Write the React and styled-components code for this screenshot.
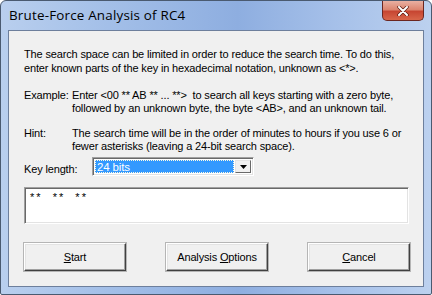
import React from "react";
import styled, { createGlobalStyle } from "styled-components";

const Global = createGlobalStyle`
  html, body {
    margin: 0;
    padding: 0;
    background: #ffffff;
  }
  body {
    font-family: "Liberation Sans", Arial, sans-serif;
    font-size: 11px;
    letter-spacing: -0.15px;
    color: #000;
  }
`;

const Window = styled.div`
  width: 432px;
  height: 295px;
  box-sizing: border-box;
  border: 1px solid #4a5a70;
  border-radius: 6px 6px 2px 2px;
  background: linear-gradient(90deg, #b9cfee 0%, #a3bfe8 25%, #8eaee0 55%, #a8c2ea 80%, #bcd1ef 100%);
  display: flex;
  flex-direction: column;
  padding: 0 7px 7px 7px;
  overflow: hidden;
`;

const TitleBar = styled.div`
  height: 29px;
  display: flex;
  align-items: flex-start;
  justify-content: space-between;
`;

const Title = styled.span`
  font-family: "Open Sans", "DejaVu Sans", sans-serif;
  font-size: 13.4px;
  letter-spacing: 0.2px;
  margin-top: 5px;
  margin-left: 1px;
  color: #000;
`;

const CloseButton = styled.div`
  width: 42px;
  height: 20px;
  box-sizing: border-box;
  border: 1px solid #6b2620;
  border-top: none;
  border-radius: 0 0 5px 5px;
  background: linear-gradient(180deg, #e9b0a2 0%, #dc8570 45%, #c74632 55%, #d8664a 100%);
  display: flex;
  align-items: center;
  justify-content: center;
`;

const Client = styled.div`
  flex: 1;
  background: #f0f0f0;
  border: 1px solid #6d7f9c;
  display: flex;
  flex-direction: column;
  padding: 16px 15px 0 15px;
  white-space: nowrap;
`;

const Para = styled.div`
  line-height: 14px;
  margin-bottom: 14px;
`;

const Row = styled.div`
  display: grid;
  grid-template-columns: 48px 1fr;
  line-height: 13px;
  margin-bottom: 12px;
`;

const KeyRow = styled.div`
  display: flex;
  align-items: center;
  margin-top: -8px;
`;

const KeyLabel = styled.span`
  width: 68px;
  margin-top: 5px;
`;

const Combo = styled.div`
  width: 162px;
  height: 19px;
  box-sizing: border-box;
  border-top: 1px solid #a0a0a0;
  border-left: 1px solid #a0a0a0;
  border-right: 1px solid #fff;
  border-bottom: 1px solid #fff;
  box-shadow: inset 1px 1px 0 #696969, inset -1px -1px 0 #e3e3e3;
  background: #fff;
  display: flex;
  padding: 2px;
`;

const Selected = styled.div`
  flex: 1;
  background: #3399ff;
  color: #fff;
  font-size: 11.5px;
  outline: 1px dotted #fffbe0;
  outline-offset: -1px;
  padding-left: 2px;
  line-height: 14px;
  margin-right: 1px;
`;

const DropButton = styled.div`
  width: 16px;
  box-sizing: border-box;
  background: #f0f0f0;
  border-top: 1px solid #e3e3e3;
  border-left: 1px solid #e3e3e3;
  border-right: 1px solid #696969;
  border-bottom: 1px solid #696969;
  display: flex;
  align-items: center;
  justify-content: center;
`;

const TextBox = styled.div`
  margin-top: 11px;
  height: 37px;
  width: 385px;
  box-sizing: border-box;
  background: #fff;
  border-top: 1px solid #a0a0a0;
  border-left: 1px solid #a0a0a0;
  border-right: 1px solid #fff;
  border-bottom: 1px solid #fff;
  box-shadow: inset 1px 1px 0 #696969, inset -1px -1px 0 #e3e3e3;
  padding: 3px 5px;
  letter-spacing: 2px;
  white-space: pre;
`;

const Buttons = styled.div`
  display: flex;
  justify-content: space-between;
  width: 386px;
  margin-top: 19px;
`;

const Button = styled.div`
  width: 102px;
  height: 28px;
  box-sizing: border-box;
  background: #f0f0f0;
  border-top: 1px solid #fff;
  border-left: 1px solid #fff;
  border-right: 1px solid #404040;
  border-bottom: 1px solid #404040;
  box-shadow: inset -1px -1px 0 #a0a0a0, inset 1px 1px 0 #e3e3e3;
  outline: 1px solid #b5b5b5;
  display: flex;
  align-items: center;
  justify-content: center;
  u {
    text-decoration: underline;
  }
`;

export default function App() {
  return (
    <>
      <Global />
      <Window>
        <TitleBar>
          <Title>Brute-Force Analysis of RC4</Title>
          <CloseButton>
            <svg width="12" height="10" viewBox="0 0 12 10">
              <path d="M2 1 L10 9 M10 1 L2 9" stroke="#5a1a10" strokeWidth="3.4" strokeLinecap="round" />
              <path d="M2 1 L10 9 M10 1 L2 9" stroke="#fff" strokeWidth="2" strokeLinecap="round" />
            </svg>
          </CloseButton>
        </TitleBar>
        <Client>
          <Para>
            The search space can be limited in order to reduce the search time. To do this,
            <br />
            enter known parts of the key in hexadecimal notation, unknown as &lt;*&gt;.
          </Para>
          <Row>
            <span>Example:</span>
            <span>
              Enter &lt;00 ** AB ** ... **&gt;&nbsp; to search all keys starting with a zero byte,
              <br />
              followed by an unknown byte, the byte &lt;AB&gt;, and an unknown tail.
            </span>
          </Row>
          <Row>
            <span>Hint:</span>
            <span>
              The search time will be in the order of minutes to hours if you use 6 or
              <br />
              fewer asterisks (leaving a 24-bit search space).
            </span>
          </Row>
          <KeyRow>
            <KeyLabel>Key length:</KeyLabel>
            <Combo>
              <Selected>24 bits</Selected>
              <DropButton>
                <svg width="7" height="4" viewBox="0 0 7 4">
                  <path d="M0 0 H7 L3.5 4 Z" fill="#000" />
                </svg>
              </DropButton>
            </Combo>
          </KeyRow>
          <TextBox>{"**  **  **"}</TextBox>
          <Buttons>
            <Button><u>S</u>tart</Button>
            <Button>Analysis&nbsp;<u>O</u>ptions</Button>
            <Button><u>C</u>ancel</Button>
          </Buttons>
        </Client>
      </Window>
    </>
  );
}
